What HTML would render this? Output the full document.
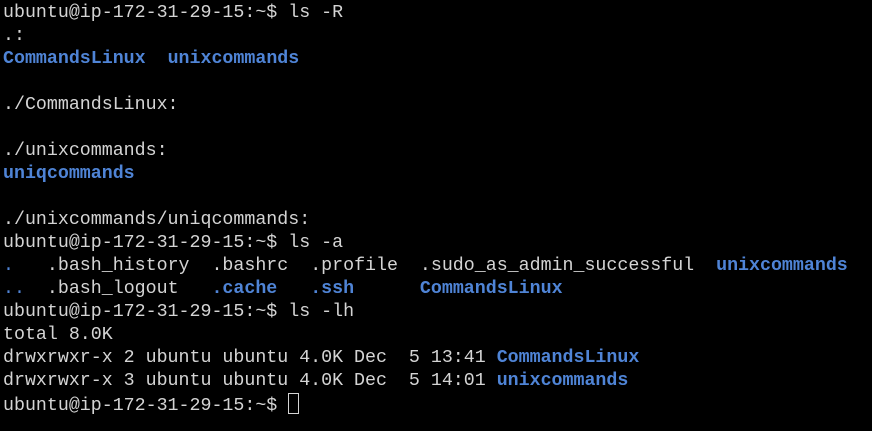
<!DOCTYPE html>
<html><head><style>
html,body{margin:0;padding:0;background:#000;width:872px;height:431px;overflow:hidden}
pre{margin:0;padding:2px 0 0 3px;font-family:"Liberation Mono","Courier New",monospace;font-size:18.3px;line-height:23px;color:#d4d4d4;white-space:pre}
b{color:#4f84d6;font-weight:bold}
.cur{display:inline-block;width:9px;height:19px;border:1px solid #d4d4d4;vertical-align:-4px}
</style></head><body><pre>ubuntu@ip-172-31-29-15:~$ ls -R
.:
<b>CommandsLinux</b>  <b>unixcommands</b>

./CommandsLinux:

./unixcommands:
<b>uniqcommands</b>

./unixcommands/uniqcommands:
ubuntu@ip-172-31-29-15:~$ ls -a
<b style="color:#4f84d6;font-weight:normal">.</b>   .bash_history  .bashrc  .profile  .sudo_as_admin_successful  <b>unixcommands</b>
<b style="color:#4f84d6;font-weight:normal">..</b>  .bash_logout   <b>.cache</b>   <b>.ssh</b>      <b>CommandsLinux</b>
ubuntu@ip-172-31-29-15:~$ ls -lh
total 8.0K
drwxrwxr-x 2 ubuntu ubuntu 4.0K Dec  5 13:41 <b>CommandsLinux</b>
drwxrwxr-x 3 ubuntu ubuntu 4.0K Dec  5 14:01 <b>unixcommands</b>
ubuntu@ip-172-31-29-15:~$ <span class="cur"></span></pre></body></html>
